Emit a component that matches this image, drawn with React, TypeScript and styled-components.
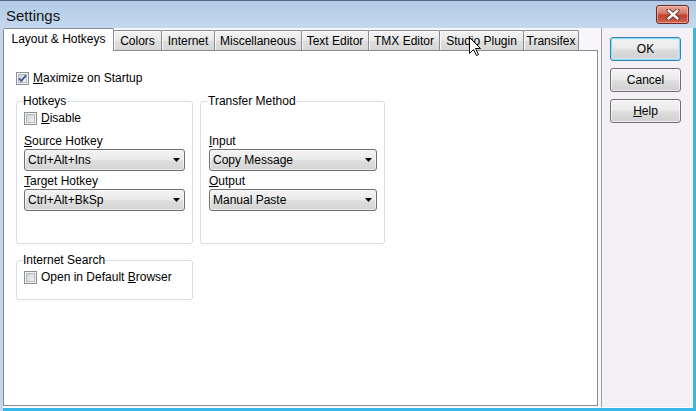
import React, { useId } from "react";
import styled, { createGlobalStyle } from "styled-components";

const GlobalStyle = createGlobalStyle`
  html, body { margin: 0; padding: 0; }
  body {
    width: 696px; height: 411px; overflow: hidden;
    font-family: "Liberation Sans", Arial, sans-serif;
    font-size: 12px; color: #000;
  }
  * { box-sizing: border-box; }
`;

const Window = styled.div`
  position: relative;
  width: 696px;
  height: 411px;
  display: flex;
  flex-direction: column;
  background: #c2d7ee;
  overflow: hidden;
`;

const TitleBar = styled.div`
  flex: none;
  height: 28px;
  display: flex;
  align-items: flex-start;
  padding-left: 6px;
  border-top: 1px solid #52698a;
  background: linear-gradient(#b3cbe7, #c3d8ee);
`;

const Title = styled.div`
  margin-top: 5px;
  font-size: 15px;
  line-height: 20px;
  color: #151515;
`;

const CloseButton = styled.div`
  margin-left: auto;
  margin-right: 7px;
  margin-top: 4px;
  width: 33px;
  height: 19px;
  border: 1px solid #6b2a24;
  border-radius: 3px;
  background: linear-gradient(#e9a898 0%, #d67a68 42%, #c24131 55%, #cf6450 100%);
  box-shadow: inset 0 0 0 1px rgba(255, 210, 200, 0.5);
  display: flex;
  align-items: center;
  justify-content: center;
`;

const Body = styled.div`
  flex: 1;
  min-height: 0;
  display: flex;
  padding-left: 3px;
`;

const Client = styled.div`
  flex: 1;
  display: flex;
  background: #fff;
  border-right: 3px solid #36b8e6;
  border-bottom: 3px solid #36b8e6;
  padding: 0 1px 1px 0;
`;

const Main = styled.div`
  width: 598px;
  flex: none;
  display: flex;
  flex-direction: column;
  background: #f8f6f8;
  padding: 0 3px 1px 0;
`;

const TabStrip = styled.div`
  flex: none;
  height: 22px;
  display: flex;
  align-items: flex-end;
`;

const Tab = styled.div<{ $w: number; $active?: boolean }>`
  width: ${(p) => p.$w}px;
  height: ${(p) => (p.$active ? 23 : 20)}px;
  margin-bottom: ${(p) => (p.$active ? -1 : 0)}px;
  margin-left: -1px;
  &:first-child { margin-left: 0; }
  border: 1px solid #898c95;
  border-bottom: none;
  border-radius: 2px 2px 0 0;
  background: ${(p) =>
    p.$active ? "#fff" : "linear-gradient(#f3f3f3 0%, #e9e9e9 50%, #dedede 55%, #d6d6d6 100%)"};
  box-shadow: ${(p) => (p.$active ? "none" : "inset 1px 1px 0 rgba(255,255,255,0.8)")};
  ${(p) => (p.$active ? "position: relative; z-index: 2;" : "")}
  padding-top: 3px;
  line-height: 15px;
  text-align: center;
  white-space: nowrap;
`;

const Panel = styled.div`
  flex: 1;
  background: #fff;
  border: 1px solid #898c95;
  padding: 20px 0 0 12px;
  display: flex;
  flex-direction: column;
  align-items: flex-start;
`;

const CheckRow = styled.div`
  display: flex;
  align-items: center;
  height: 15px;
  line-height: 15px;
  white-space: nowrap;
  svg { margin-right: 4px; flex: none; }
`;

const Columns = styled.div`
  display: flex;
  gap: 7px;
  margin-top: 8px;
  align-items: flex-start;
`;

const LeftCol = styled.div`
  display: flex;
  flex-direction: column;
  gap: 9px;
`;

const Group = styled.fieldset<{ $w: number; $pt: number; $pb: number; $pl?: number }>`
  width: ${(p) => p.$w}px;
  margin: 0;
  min-inline-size: 0;
  padding: ${(p) => `${p.$pt}px 7px ${p.$pb}px ${p.$pl ?? 7}px`};
  border: 1px solid #d5dfe5;
  border-radius: 3px;
  display: flex;
  flex-direction: column;
`;

const Legend = styled.legend`
  padding: 0;
  margin-left: -1px;
  line-height: 15px;
  font-size: 12px;
`;

const Label = styled.div<{ $mt: number }>`
  margin-top: ${(p) => p.$mt}px;
  line-height: 15px;
`;

const Combo = styled.div`
  height: 22px;
  border: 1px solid #707070;
  border-radius: 3px;
  background: linear-gradient(#f3f3f3 0%, #ebebeb 45%, #dedede 55%, #d4d4d4 100%);
  box-shadow: inset 0 0 0 1px rgba(255, 255, 255, 0.55);
  display: flex;
  align-items: center;
  justify-content: space-between;
  padding: 0 4px 0 3px;
  white-space: nowrap;
`;

const ButtonPanel = styled.div`
  flex: 1;
  background: #f5f0f5;
  border-left: 1px solid #9d9d9d;
  padding: 9px 0 0 8px;
  display: flex;
  flex-direction: column;
  gap: 7px;
`;

const Button = styled.div<{ $default?: boolean }>`
  width: 71px;
  height: 24px;
  border: 1px solid ${(p) => (p.$default ? "#3c7fb1" : "#707070")};
  border-radius: 3px;
  background: linear-gradient(#f3f3f3 0%, #ebebeb 45%, #dddddd 55%, #cfcfcf 100%);
  box-shadow: ${(p) =>
    p.$default ? "inset 0 0 0 1px #8fdcf7, inset 0 0 0 2px rgba(200,240,255,0.6)" : "inset 0 0 0 1px rgba(255,255,255,0.6)"};
  display: flex;
  align-items: center;
  justify-content: center;
  line-height: 15px;
`;

const Cursor = styled.svg`
  position: absolute;
  left: 469px;
  top: 37px;
  z-index: 10;
`;

const CheckBox: React.FC<{ checked?: boolean }> = ({ checked }) => {
  const id = useId().replace(/:/g, "");
  return (
    <svg width="13" height="13" viewBox="0 0 13 13">
      <defs>
        <linearGradient id={`g${id}`} x1="0" y1="0" x2="1" y2="1">
          <stop offset="0" stopColor="#cbcfd5" />
          <stop offset="1" stopColor="#f7f7f7" />
        </linearGradient>
      </defs>
      <rect x="0.5" y="0.5" width="12" height="12" fill="#f4f4f4" stroke="#8e8f8f" />
      <rect x="2.5" y="2.5" width="8" height="8" fill={`url(#g${id})`} stroke="#b3b8be" />
      {checked && (
        <path d="M3 6.3 L5.3 8.8 L10 3.4" fill="none" stroke="#42588f" strokeWidth="1.9" />
      )}
    </svg>
  );
};

const Arrow = () => (
  <svg width="7" height="4" viewBox="0 0 7 4">
    <polygon points="0,0 7,0 3.5,4" fill="#000" />
  </svg>
);

const ComboBox: React.FC<{ w: number; value: string }> = ({ w, value }) => (
  <Combo style={{ width: w }}>
    <span>{value}</span>
    <Arrow />
  </Combo>
);

const tabs: { label: string; w: number }[] = [
  { label: "Layout & Hotkeys", w: 111 },
  { label: "Colors", w: 49 },
  { label: "Internet", w: 54 },
  { label: "Miscellaneous", w: 88 },
  { label: "Text Editor", w: 68 },
  { label: "TMX Editor", w: 72 },
  { label: "Studio Plugin", w: 85 },
  { label: "Transifex", w: 56 },
];

export default function App() {
  return (
    <>
      <GlobalStyle />
      <Window>
        <TitleBar>
          <Title>Settings</Title>
          <CloseButton>
            <svg width="14" height="11" viewBox="0 0 14 11">
              <path d="M2.5 1.5 L11.5 9.5 M11.5 1.5 L2.5 9.5" stroke="#5a1d17" strokeWidth="4" strokeLinecap="round" />
              <path d="M2.5 1.5 L11.5 9.5 M11.5 1.5 L2.5 9.5" stroke="#fff" strokeWidth="2.4" strokeLinecap="round" />
            </svg>
          </CloseButton>
        </TitleBar>
        <Body>
          <Client>
            <Main>
              <TabStrip>
                {tabs.map((t, i) => (
                  <Tab key={t.label} $w={t.w} $active={i === 0}>
                    {t.label}
                  </Tab>
                ))}
              </TabStrip>
              <Panel>
                <CheckRow>
                  <CheckBox checked />
                  <span>
                    <u>M</u>aximize on Startup
                  </span>
                </CheckRow>
                <Columns>
                  <LeftCol>
                    <Group $w={177} $pt={2} $pb={32}>
                      <Legend>Hotkeys</Legend>
                      <CheckRow>
                        <CheckBox />
                        <span>
                          <u>D</u>isable
                        </span>
                      </CheckRow>
                      <Label $mt={8}>
                        <u>S</u>ource Hotkey
                      </Label>
                      <ComboBox w={161} value="Ctrl+Alt+Ins" />
                      <Label $mt={3}>
                        <u>T</u>arget Hotkey
                      </Label>
                      <ComboBox w={161} value="Ctrl+Alt+BkSp" />
                    </Group>
                    <Group $w={177} $pt={2} $pb={14}>
                      <Legend>Internet Search</Legend>
                      <CheckRow>
                        <CheckBox />
                        <span>
                          Open in Default <u>B</u>rowser
                        </span>
                      </CheckRow>
                    </Group>
                  </LeftCol>
                  <Group $w={185} $pt={25} $pb={32} $pl={8}>
                    <Legend>Transfer Method</Legend>
                    <Label $mt={0}>
                      <u>I</u>nput
                    </Label>
                    <ComboBox w={168} value="Copy Message" />
                    <Label $mt={3}>
                      <u>O</u>utput
                    </Label>
                    <ComboBox w={168} value="Manual Paste" />
                  </Group>
                </Columns>
              </Panel>
            </Main>
            <ButtonPanel>
              <Button $default>OK</Button>
              <Button>Cancel</Button>
              <Button>
                <span>
                  <u>H</u>elp
                </span>
              </Button>
            </ButtonPanel>
          </Client>
        </Body>
        <Cursor width="13" height="20" viewBox="0 0 13 20">
          <path
            d="M0.5 0.5 L0.5 16.5 L4.5 12.5 L7.5 18.5 L9.5 17.5 L6.5 11.5 L11.5 11.5 Z"
            fill="#fff"
            stroke="#000"
            strokeWidth="1"
          />
        </Cursor>
      </Window>
    </>
  );
}
